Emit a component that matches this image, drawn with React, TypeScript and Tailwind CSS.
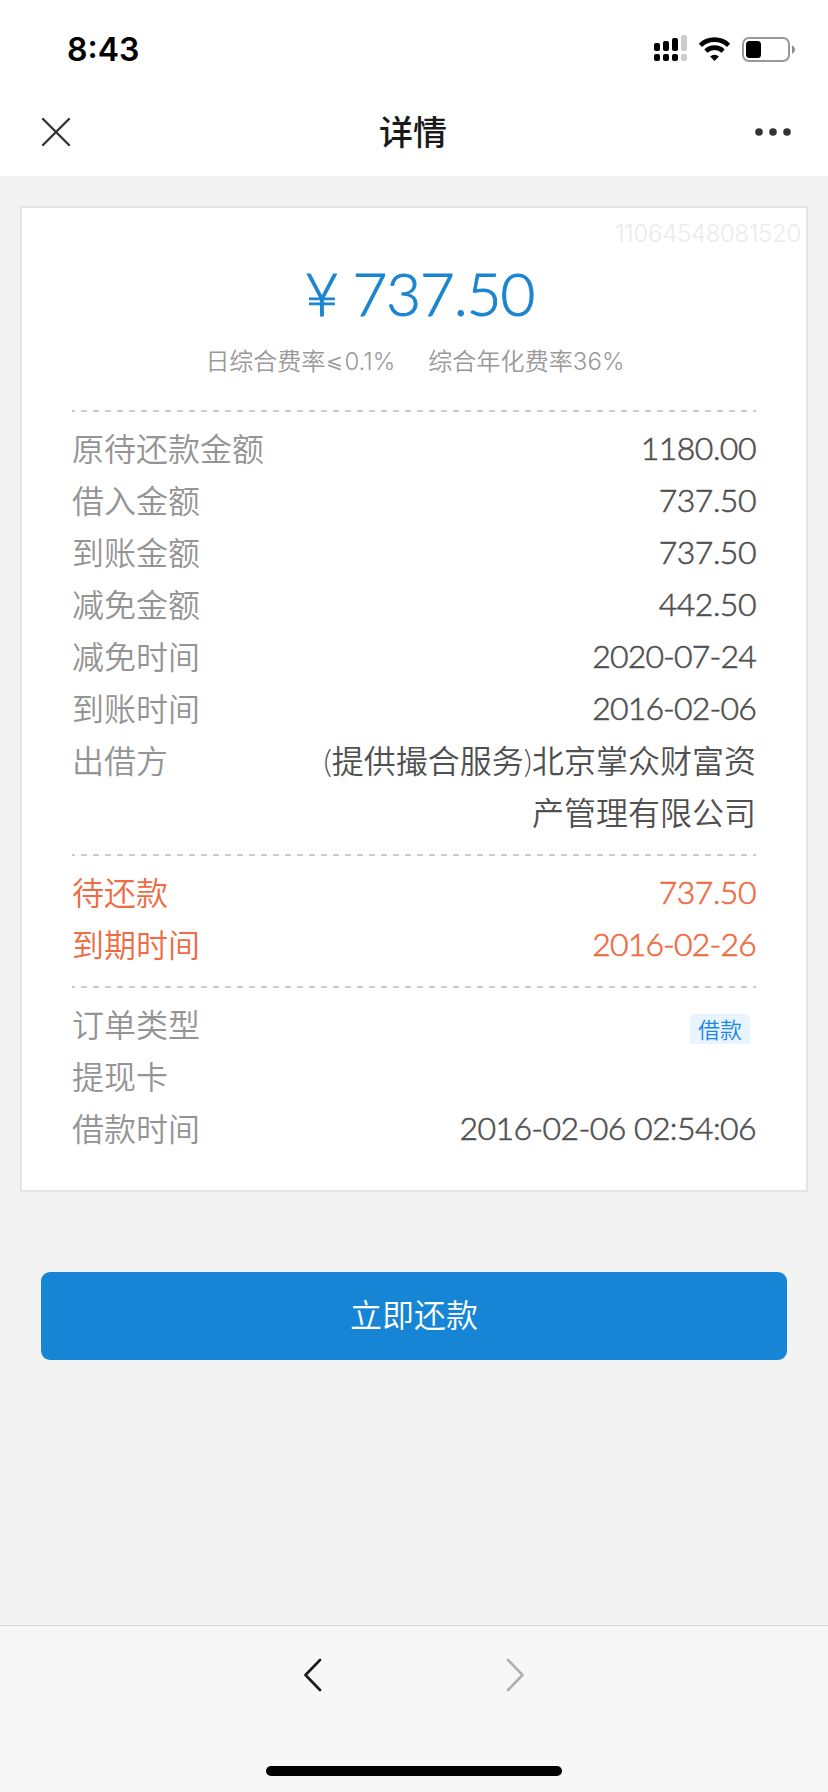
import React from 'react';

interface DetailItem {
  label: string;
  value?: string;
  tag?: string;
}

const amountItems: DetailItem[] = [
  { label: '原待还款金额', value: '1180.00' },
  { label: '借入金额', value: '737.50' },
  { label: '到账金额', value: '737.50' },
  { label: '减免金额', value: '442.50' },
  { label: '减免时间', value: '2020-07-24' },
  { label: '到账时间', value: '2016-02-06' },
  { label: '出借方', value: '(提供撮合服务)北京掌众财富资产管理有限公司' },
];

const dueItems: DetailItem[] = [
  { label: '待还款', value: '737.50' },
  { label: '到期时间', value: '2016-02-26' },
];

const orderItems: DetailItem[] = [
  { label: '订单类型', tag: '借款' },
  { label: '提现卡' },
  { label: '借款时间', value: '2016-02-06 02:54:06' },
];

const valueClass = (value: string) => {
  // Names wrap onto a second line, amounts and dates never do
  if (value.startsWith('(')) return '-mb-px w-[440px] pt-px';
  if (value.includes(':')) return 'font-light tracking-[-0.58px] [font-kerning:none] [-webkit-text-stroke:0.6px]';
  if (value.includes('-')) return 'font-light tracking-[-0.84px] [font-kerning:none] [-webkit-text-stroke:0.6px]';
  return 'font-light tracking-[-0.5px] [font-kerning:none] [-webkit-text-stroke:0.6px]';
};

const StatusBar: React.FC = () => (
  <div className="flex h-[88px] items-start justify-between pt-[35px] pl-[67px] pr-[32px]">
    <span className="-mt-px font-['Inter'] text-[32px] leading-[32px] font-semibold text-black">8:43</span>
    <svg width="142" height="28" viewBox="0 0 142 28" fill="none">
      {/* Signal */}
      <g fill="#000">
        <rect x="0" y="8" width="6" height="8" rx="2" />
        <rect x="9" y="6" width="6" height="10" rx="2" />
        <rect x="18" y="3" width="6" height="13" rx="2" />
        <rect x="0" y="19" width="6" height="7" rx="2" />
        <rect x="9" y="19" width="6" height="7" rx="2" />
        <rect x="18" y="19" width="6" height="7" rx="2" />
      </g>
      <g fill="#ccc">
        <rect x="27" y="0" width="6" height="16" rx="2" />
        <rect x="27" y="19" width="6" height="7" rx="2" />
      </g>
      {/* Wifi */}
      <g stroke="#000" strokeWidth="4.6">
        <path d="M46.4 10.3a20.3 20.3 0 0 1 28.2 0" />
        <path d="M51.9 16.1a12.4 12.4 0 0 1 17.2 0" />
      </g>
      <path d="M60.5 26l-4.4-4.5a6.6 6.6 0 0 1 8.8 0z" fill="#000" />
      {/* Battery */}
      <rect x="89" y="3" width="46" height="23" rx="6" stroke="#999" strokeWidth="2" />
      <rect x="92" y="6" width="15" height="17" rx="3.5" fill="#000" />
      <path d="M138 10.5c1.9.8 3 2.3 3 4.1s-1.1 3.3-3 4.1z" fill="#8c8c8c" />
    </svg>
  </div>
);

const NavBar: React.FC = () => (
  <div className="flex h-[88px] items-center justify-between pl-[41px] pr-[36px]">
    <svg width="30" height="30" viewBox="0 0 30 30" stroke="#333" strokeWidth="2.4" strokeLinecap="round">
      <path d="M2 2l26 26M28 2L2 28" />
    </svg>
    <h1 className="text-[34px] leading-[40px] font-medium text-[#1a1a1a]">详情</h1>
    <svg width="37" height="10" viewBox="0 0 37 10" fill="#333">
      <circle cx="4" cy="5" r="3.8" />
      <circle cx="18" cy="5" r="3.8" />
      <circle cx="32" cy="5" r="3.8" />
    </svg>
  </div>
);

const Divider: React.FC = () => (
  <div className="h-[2px] bg-[repeating-linear-gradient(90deg,#ccc_0_6px,transparent_6px_12px)] bg-[position:-3px_0] bg-[length:696px_2px]" />
);

const DetailList: React.FC<{ items: DetailItem[]; highlight?: boolean }> = ({ items, highlight }) => (
  <ul className={highlight ? 'pt-[10px] text-[#ee6b43]' : 'pt-[10px] text-[#505050]'}>
    {items.map((item) => (
      <li key={item.label} className="flex justify-between text-[32px] leading-[52px]">
        <span className={highlight ? '-mb-px pt-px' : '-mb-px pt-px text-[#949494]'}>{item.label}</span>
        {item.value && (
          <span className={`text-right ${valueClass(item.value)}`}>{item.value}</span>
        )}
        {item.tag && (
          <span className="mt-[16px] mr-[6px] h-[30px] rounded-t-[5px] rounded-b-[1px] bg-[#e8f4ff] px-2 text-[22px] leading-[31px] text-[#1c88e5]">
            {item.tag}
          </span>
        )}
      </li>
    ))}
  </ul>
);

const App: React.FC = () => {
  return (
    <div className="flex h-[1792px] w-[828px] flex-col bg-[#f3f3f3] font-['Lato','Noto_Sans_CJK_SC',sans-serif] font-[350]">
      {/* Header */}
      <header className="h-[176px] bg-white">
        <StatusBar />
        <NavBar />
      </header>

      {/* Detail card */}
      <main className="flex-1 px-5 pt-[30px]">
        <section className="relative h-[986px] border-2 border-[#e4e4e4] bg-white px-[50px]">
          <span className="absolute top-[9px] right-[5px] font-['Inter'] text-[24px] leading-[34px] font-light tracking-[-0.3px] text-[#ebebeb]">
            11064548081520
          </span>
          <div className="flex h-[202px] flex-col items-center pt-[45px] pb-[28px]">
            <div className="flex items-baseline gap-[13px] pl-[11px] text-[60px] leading-[80px] font-light text-[#1c85d0] [-webkit-text-stroke:1px]">
              <span>¥</span>
              <span className="tracking-[-1px] [font-kerning:none]">737.50</span>
            </div>
            <div className="mt-[11px] flex gap-[33px] pl-[2px] font-['Inter','Noto_Sans_CJK_SC',sans-serif] text-[24px] leading-[36px] text-[#999]">
              <span>
                日综合费率<span className="mx-px align-[2px] font-['DejaVu_Sans_Light','DejaVu_Sans'] text-[20px] leading-none font-extralight">⩽</span>0.1%
              </span>
              <span className="tracking-[0.1px]">综合年化费率36%</span>
            </div>
          </div>
          <Divider />
          <DetailList items={amountItems} />
          <div className="h-4" />
          <Divider />
          <DetailList items={dueItems} highlight />
          <div className="h-4" />
          <Divider />
          <DetailList items={orderItems} />
        </section>

        <button className="mx-[21px] mt-[80px] block h-[88px] w-[746px] rounded-[9px] bg-[#1785d6] pb-[3px] text-[32px] text-white">
          立即还款
        </button>
      </main>

      {/* Browser toolbar */}
      <footer className="flex h-[167px] flex-col items-center border-t border-[#d8d8d8] bg-[#f7f7f7] pt-[32px]">
        <div className="flex w-[220px] justify-between">
          <svg width="18" height="34" viewBox="0 0 18 34" fill="none" stroke="#1a1a1a" strokeWidth="2.6" strokeLinecap="round" strokeLinejoin="round">
            <path d="M16 2L1.5 17L16 32" />
          </svg>
          <svg width="18" height="34" viewBox="0 0 18 34" fill="none" stroke="#b0b0b0" strokeWidth="2.6" strokeLinecap="round" strokeLinejoin="round">
            <path d="M2 2L16.5 17L2 32" />
          </svg>
        </div>
        <div className="mt-[74px] h-[10px] w-[296px] rounded-full bg-black" />
      </footer>
    </div>
  );
};

export default App;
